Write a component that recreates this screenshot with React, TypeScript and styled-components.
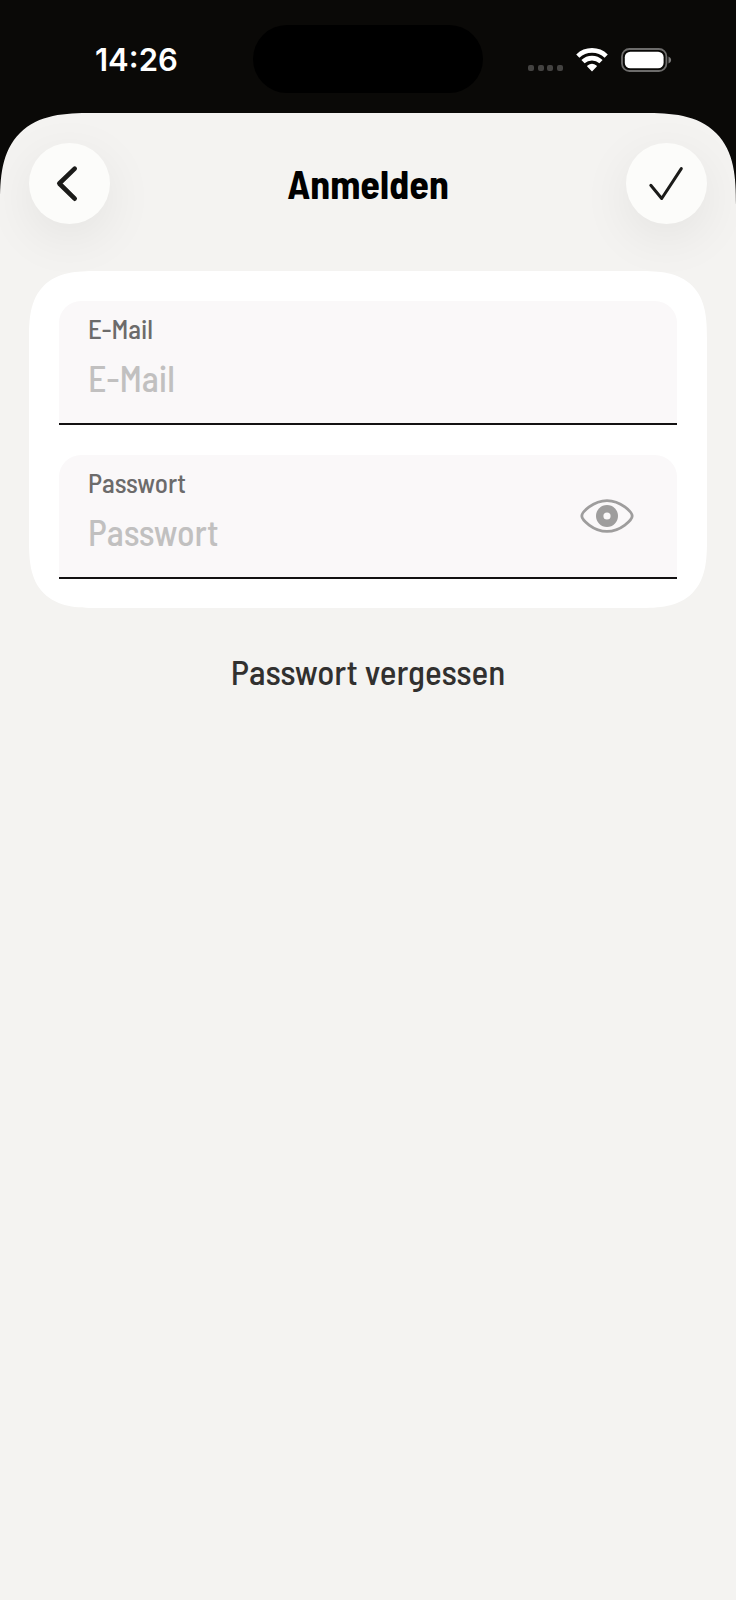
import React, { useState } from 'react';
import styled, { createGlobalStyle } from 'styled-components';

const GlobalStyle = createGlobalStyle`
  *, *::before, *::after { box-sizing: border-box; }
  body {
    margin: 0;
    background: #0a0907;
    font-family: "Barlow Semi Condensed", "Roboto Condensed", sans-serif;
  }
  button, input { font: inherit; color: inherit; }
`;

const Screen = styled.div`
  display: flex;
  flex-direction: column;
  min-height: 100vh;
`;

const StatusBar = styled.header`
  display: grid;
  grid-template-columns: 1fr 230px 1fr;
  align-items: center;
  padding: 25px 0 20px;
`;

const Time = styled.time`
  padding: 2px 0 0 95px;
  font-family: Inter, sans-serif;
  font-size: 31px;
  font-weight: 600;
  line-height: 40px;
  color: #fff;
`;

const Island = styled.div`
  height: 68px;
  border-radius: 34px;
  background: #000;
`;

const StatusIcons = styled.div`
  display: flex;
  justify-content: flex-end;
  align-items: center;
  gap: 13px;
  padding: 1px 64px 0 0;
`;

const Sheet = styled.main`
  flex: 1;
  display: flex;
  flex-direction: column;
  padding: 0 29px;
  border-radius: 72px 72px 0 0;
  background: #f4f3f1;
  overflow: hidden;

  @supports (corner-shape: superellipse(1.5)) {
    border-radius: 92px 92px 0 0;
    corner-shape: superellipse(1.5);
  }
`;

const NavBar = styled.div`
  display: flex;
  align-items: center;
  justify-content: space-between;
  padding: 30px 0 47px;
`;

const Title = styled.h1`
  margin: 0;
  padding-bottom: 2px;
  font-size: 40px;
  font-weight: 700;
  line-height: 48px;
  color: #000;
`;

const RoundButton = styled.button`
  display: grid;
  width: 81px;
  height: 81px;
  padding: 0;
  border: 0;
  border-radius: 50%;
  background: #fcfcfa;
  color: #1b1b19;
  box-shadow: 0 14px 52px rgba(0, 0, 0, 0.07);
  cursor: pointer;
`;

const Card = styled.form`
  position: relative;
  display: flex;
  flex-direction: column;
  gap: 30px;
  padding: 30px 30px 29px;
  border-radius: 54px;
  background: #fff;

  @supports (corner-shape: superellipse(1.5)) {
    border-radius: 68px;
    corner-shape: superellipse(1.5);
  }
`;

const Field = styled.div`
  display: flex;
  align-items: center;
  padding: 11px 43px 23px 29px;
  border-bottom: 2px solid #131112;
  border-radius: 22px 22px 0 0;
  background: #faf8f9;
`;

const FieldBody = styled.div`
  flex: 1;
  display: flex;
  flex-direction: column;
  gap: 12px;
  min-width: 0;
`;

const Label = styled.label`
  font-size: 27px;
  font-weight: 500;
  line-height: 32px;
  color: #6c6b6b;
`;

const Input = styled.input`
  width: 100%;
  height: 44px;
  padding: 0;
  border: 0;
  outline: 0;
  background: transparent;
  font-size: 36px;
  font-weight: 500;
  line-height: 44px;
  color: #1b1b19;

  &::placeholder {
    color: #c1c0c0;
    opacity: 1;
  }
`;

const RevealButton = styled.button`
  display: grid;
  margin-top: 12px;
  padding: 0;
  border: 0;
  background: transparent;
  color: #9e9d9d;
  cursor: pointer;
`;

const ForgotLink = styled.a`
  align-self: center;
  margin-top: 42px;
  font-size: 35px;
  font-weight: 500;
  line-height: 42px;
  color: #31302f;
  text-decoration: none;
`;

const SignalDots = () => (
  <svg width="35" height="24" viewBox="0 0 35 24" fill="#444341" aria-hidden="true">
    {[0, 10, 19, 29].map((x) => (
      <rect key={x} x={x} y="17" width="6" height="6" rx="2" />
    ))}
  </svg>
);

const Wifi = () => (
  <svg width="32" height="24" viewBox="0 0 32 24" aria-hidden="true">
    <g fill="none" stroke="#fff" strokeWidth="4.6">
      <path d="M1.8 8.1 A20.5 20.5 0 0 1 30.2 8.1" />
      <path d="M7 13.7 A13 13 0 0 1 25 13.7" />
    </g>
    <path fill="#fff" d="M16 23.4 L11.2 18.6 Q10.9 17.9 11.5 17.5 Q16 14.2 20.5 17.5 Q21.1 17.9 20.8 18.6 Z" />
  </svg>
);

const Battery = () => (
  <svg width="51" height="24" viewBox="0 0 51 24" aria-hidden="true">
    <rect x="1" y="1" width="44.4" height="22" rx="7.5" fill="none" stroke="#6d6c6b" strokeWidth="1.8" />
    <rect x="3.8" y="3.7" width="38.8" height="16.6" rx="5.5" fill="#fff" />
    <path d="M47.5 8.5 Q50.2 9.5 50.2 12 Q50.2 14.5 47.5 15.5 Z" fill="#7c7b7a" />
  </svg>
);

const Chevron = () => (
  <svg width="81" height="81" viewBox="0 0 81 81" fill="none" stroke="currentColor" strokeWidth="4.6" strokeLinecap="round" strokeLinejoin="round" aria-hidden="true">
    <path d="M45.7 25.7 L30.3 40.5 L45.7 55.7" />
  </svg>
);

const Check = () => (
  <svg width="81" height="81" viewBox="0 0 81 81" fill="none" stroke="currentColor" strokeWidth="3" strokeLinecap="round" strokeLinejoin="round" aria-hidden="true">
    <path d="M24.8 42.3 L35.7 55.5 L55.3 25.6" />
  </svg>
);

const Eye = () => (
  <svg width="54" height="36" viewBox="0 0 54 36" aria-hidden="true">
    <path
      d="M1.8 18 C1.8 14.5 13 2.6 27 2.6 S52.2 14.5 52.2 18 S41 33.4 27 33.4 S1.8 21.5 1.8 18 Z"
      fill="none"
      stroke="currentColor"
      strokeWidth="2.8"
    />
    <circle cx="27" cy="18" r="7.3" fill="none" stroke="currentColor" strokeWidth="7.4" />
  </svg>
);

export default function App() {
  const [visible, setVisible] = useState(false);

  return (
    <>
      <GlobalStyle />
      <Screen>
        <StatusBar>
          <Time>14:26</Time>
          <Island />
          <StatusIcons>
            <SignalDots />
            <Wifi />
            <Battery />
          </StatusIcons>
        </StatusBar>
        <Sheet>
          <NavBar>
            <RoundButton type="button" aria-label="Zurück">
              <Chevron />
            </RoundButton>
            <Title>Anmelden</Title>
            <RoundButton type="submit" form="login" aria-label="Bestätigen">
              <Check />
            </RoundButton>
          </NavBar>
          <Card id="login" onSubmit={(event) => event.preventDefault()}>
            <Field>
              <FieldBody>
                <Label htmlFor="email">E-Mail</Label>
                <Input id="email" type="email" placeholder="E-Mail" />
              </FieldBody>
            </Field>
            <Field>
              <FieldBody>
                <Label htmlFor="password">Passwort</Label>
                <Input id="password" type={visible ? 'text' : 'password'} placeholder="Passwort" />
              </FieldBody>
              <RevealButton type="button" aria-label="Passwort anzeigen" onClick={() => setVisible(!visible)}>
                <Eye />
              </RevealButton>
            </Field>
          </Card>
          <ForgotLink href="#passwort">Passwort vergessen</ForgotLink>
        </Sheet>
      </Screen>
    </>
  );
}
